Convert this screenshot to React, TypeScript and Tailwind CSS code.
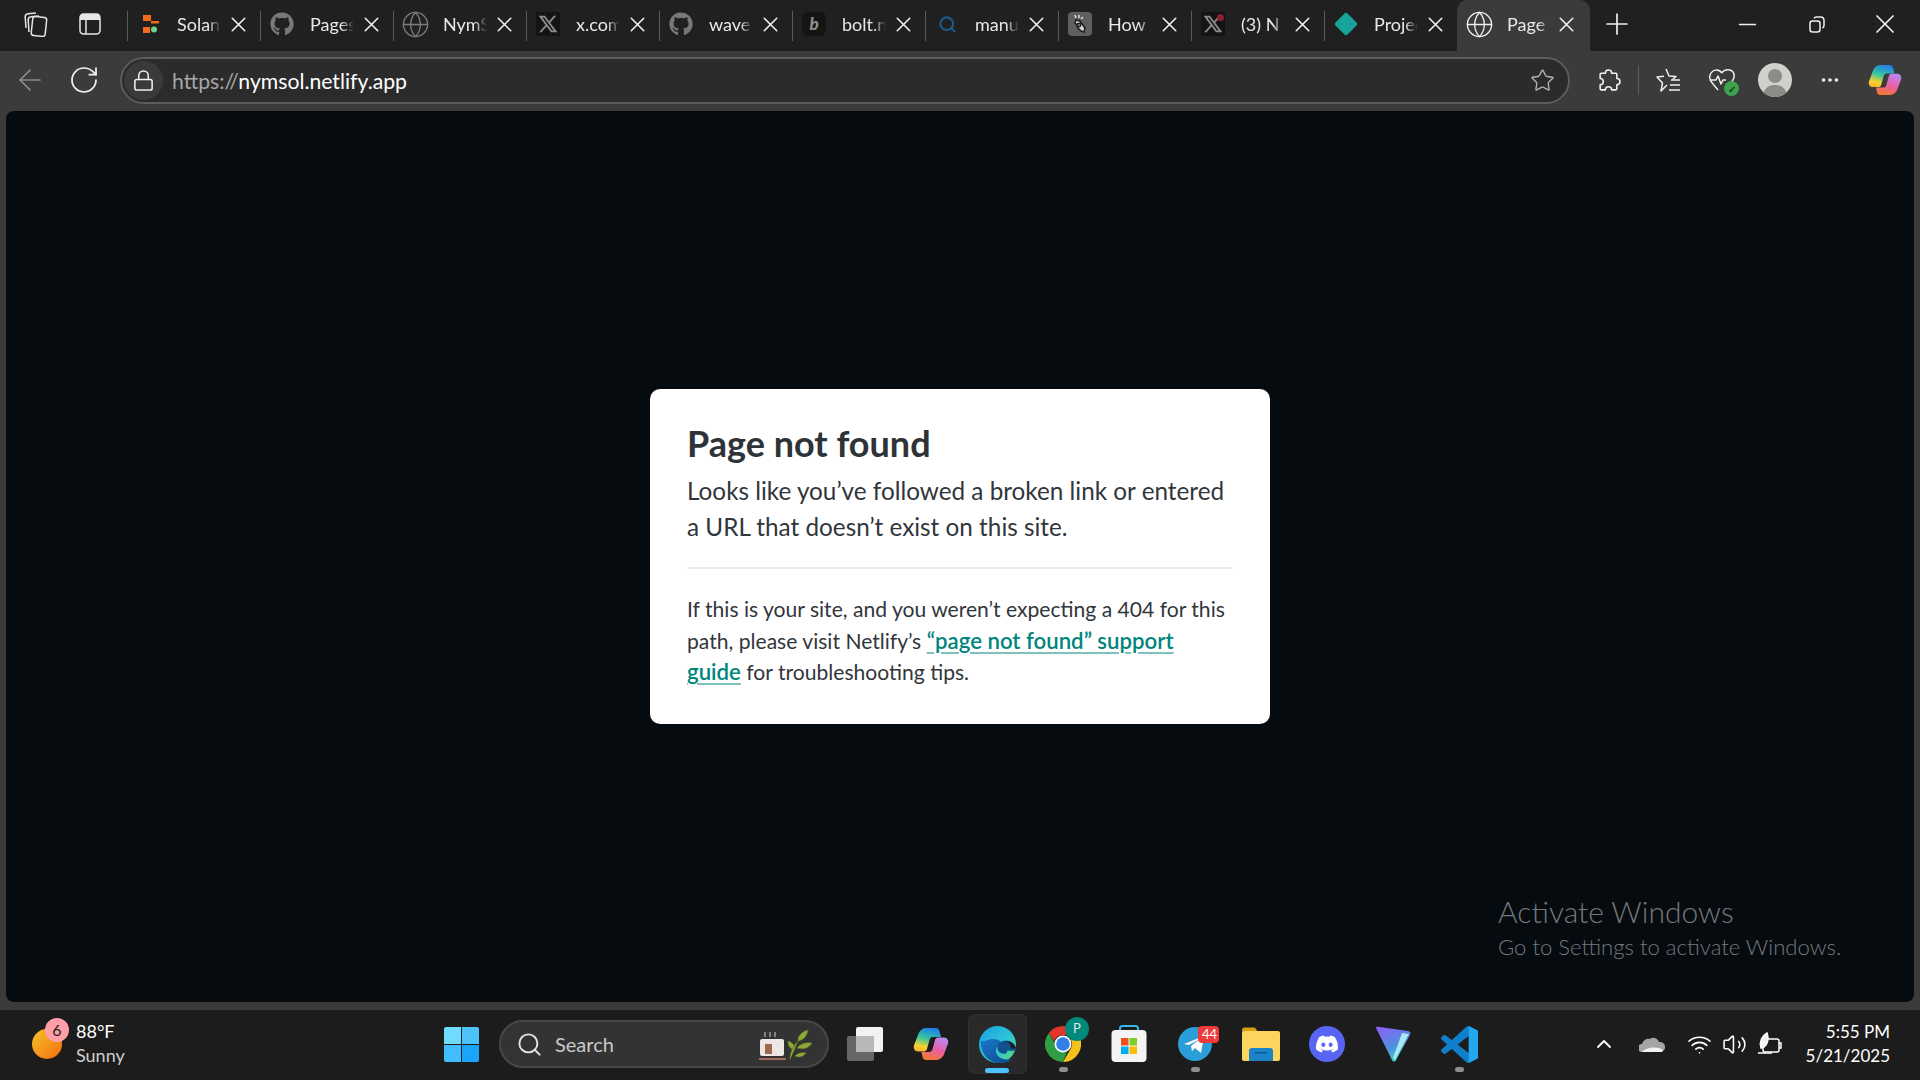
import { Globe, Search as SearchIcon, X, Plus, Minus, ArrowLeft, RotateCw, Star, ChevronUp, Wifi, Volume2, Ellipsis, Lock } from 'lucide-react'
import { FaGithub, FaDiscord } from 'react-icons/fa'
import { RiTwitterXLine } from 'react-icons/ri'
import type { ReactNode } from 'react'

function SolanaFavicon() {
  return (
    <svg width="24" height="24" viewBox="0 0 24 24">
      <rect x="6" y="3" width="8" height="6" fill="#f26a1b" />
      <rect x="14" y="9" width="8" height="2.5" fill="#f26a1b" />
      <rect x="6" y="15" width="7" height="6" fill="#f26a1b" />
      <circle cx="17" cy="17.5" r="3" fill="#6fd08c" />
    </svg>
  )
}

function XFavicon({ dot }: { dot?: boolean }) {
  return (
    <div className="relative flex h-6 w-6 items-center justify-center bg-[#141414] text-[#8c8c8c]">
      <RiTwitterXLine size={22} />
      {dot && <span className="absolute right-[1px] top-[2px] h-[7px] w-[7px] rounded-full bg-[#8c2230]" />}
    </div>
  )
}

function BoltFavicon() {
  return (
    <div className="flex h-6 w-6 items-center justify-center rounded-md bg-[#141414] text-[17px] font-black italic text-[#8f8f8f]">
      b
    </div>
  )
}

function HowFavicon() {
  return (
    <div className="flex h-6 w-6 items-center justify-center rounded bg-[#5f5f5f]">
      <svg width="18" height="20" viewBox="0 0 18 20" fill="none" stroke="#1e1e1e" strokeWidth="1.6">
        <path d="M5 6l4 1 2 3 3 4-1 4-3-1-3-3-1-3-2-2z" fill="#d5d5d5" />
        <circle cx="8" cy="11" r="1.6" />
        <path d="M4 1l1 3M8 1v3M12 3l-2 2" stroke="#d5d5d5" />
      </svg>
    </div>
  )
}

function NetlifyFavicon() {
  return (
    <svg width="24" height="24" viewBox="0 0 24 24">
      <rect x="3.5" y="3.5" width="17" height="17" rx="2.5" fill="#15a39a" transform="rotate(45 12 12)" />
    </svg>
  )
}

function CopilotIcon({ size }: { size: number }) {
  return (
    <svg width={size} height={size} viewBox="0 0 36 36">
      <defs>
        <linearGradient id="copA" x1="0.6" y1="0" x2="0.3" y2="1">
          <stop offset="0" stopColor="#1f7fe8" />
          <stop offset="0.45" stopColor="#37c6a0" />
          <stop offset="0.8" stopColor="#f6d32e" />
          <stop offset="1" stopColor="#f7b52c" />
        </linearGradient>
        <linearGradient id="copB" x1="0.7" y1="0" x2="0.3" y2="1">
          <stop offset="0" stopColor="#b78af0" />
          <stop offset="0.5" stopColor="#e85ea8" />
          <stop offset="1" stopColor="#f47a2c" />
        </linearGradient>
      </defs>
      <path d="M17 2h6c2 0 3 1.500 3.500 3L28 11h-8c-2 0-3 1-3.500 3l-2.500 9c-.5 1.500-1.500 2.500-3 2.500H5c-3 0-5-3-4-6l4.500-12C7 4 10 2 13 2z" fill="url(#copA)" />
      <path d="M19 34h-6c-2 0-3-1.500-3.500-3L8.500 26H16c2 0 3-1 3.500-3l2.500-9c.5-1.500 1.500-2.500 3-2.500H31c3 0 5 3 4 6l-4.500 12C29 32 26 34 23 34z" fill="url(#copB)" />
    </svg>
  )
}

function EdgeIcon() {
  return (
    <svg width="37" height="37" viewBox="0 0 36 36">
      <defs>
        <linearGradient id="edgeTop" x1="0" y1="0" x2="1" y2="1">
          <stop offset="0" stopColor="#1b9de2" />
          <stop offset="0.55" stopColor="#2dc6d8" />
          <stop offset="1" stopColor="#5fdc70" />
        </linearGradient>
        <linearGradient id="edgeLow" x1="0" y1="0" x2="1" y2="1">
          <stop offset="0" stopColor="#1a78c8" />
          <stop offset="1" stopColor="#0d4a92" />
        </linearGradient>
      </defs>
      <circle cx="18" cy="18" r="18" fill="url(#edgeTop)" />
      <path d="M2 14C1 26 9 36 20 36c5 0 9-1 12-4-4 1-8 1-11-1-4-2-6-7-3-11 1-2 3-3 5-3-3-4-8-5-12-4-4 1-7 3-9 1z" fill="url(#edgeLow)" />
      <path d="M36 21c-1-4-5-7-10-7-4 0-8 3-8 7 0 4 3 6 6 6 3 0 4-2 3-3h9z" fill="#11518f" />
      <path d="M36 22c-2-5-6-8-11-7 4 0 6 3 6 6v1z" fill="#1c1c1c" />
    </svg>
  )
}

function ChromeIcon() {
  return (
    <svg width="36" height="36" viewBox="0 0 36 36">
      <path d="M18 0a18 18 0 0 1 15.600 9H18a9 9 0 0 0-8.600 6.300L3.900 6.900A18 18 0 0 1 18 0z" fill="#e5352b" />
      <path d="M33.600 9A18 18 0 0 1 18 36l7.800-13.500A9 9 0 0 0 25.800 13.500z" fill="#f9c21b" />
      <path d="M18 36A18 18 0 0 1 3.900 6.900l7.800 13.500A9 9 0 0 0 22 26z" fill="#2f9e44" />
      <circle cx="18" cy="18" r="8.500" fill="#ffffff" />
      <circle cx="18" cy="18" r="6.800" fill="#2f7fe6" />
    </svg>
  )
}

function StoreIcon() {
  return (
    <svg width="36" height="38" viewBox="0 0 36 38">
      <path d="M9 8V3.500C9 2 10 1 11.500 1h13C26 1 27 2 27 3.500V8" fill="none" stroke="#35b6ef" strokeWidth="2" />
      <rect x="0.500" y="5" width="35" height="32" rx="4" fill="#f4f4f4" />
      <rect x="10" y="13" width="7.500" height="7.500" fill="#f1511b" />
      <rect x="18.500" y="13" width="7.500" height="7.500" fill="#80cc28" />
      <rect x="10" y="21.500" width="7.500" height="7.500" fill="#00adef" />
      <rect x="18.500" y="21.500" width="7.500" height="7.500" fill="#fbbc09" />
    </svg>
  )
}

function TelegramIcon() {
  return (
    <svg width="34" height="34" viewBox="0 0 34 34">
      <circle cx="17" cy="17" r="17" fill="#2a9ed8" />
      <path d="M6 17l20-8-3 17-6-5-3 3-1-5 9-7-11 6z" fill="#ffffff" />
    </svg>
  )
}

function FolderIcon() {
  return (
    <svg width="38" height="34" viewBox="0 0 38 34">
      <path d="M0 3c0-1.500 1-2.500 2.500-2.500h9c1 0 2 .5 2.500 1.500l1.500 2.500H0z" fill="#d9a016" />
      <rect x="0" y="4" width="38" height="30" rx="2" fill="#fcd55f" />
      <path d="M7 34V24c0-2 1-3 3-3h18c2 0 3 1 3 3v10z" fill="#1b84c9" />
      <rect x="13" y="25" width="12" height="1.600" fill="#0e5d96" />
    </svg>
  )
}

function VpnIcon() {
  return (
    <svg width="36" height="36" viewBox="0 0 36 36">
      <defs>
        <linearGradient id="vpnA" x1="0.2" y1="0" x2="0.6" y2="1">
          <stop offset="0" stopColor="#8a63f5" />
          <stop offset="0.6" stopColor="#4e8fe0" />
          <stop offset="1" stopColor="#3fd8c8" />
        </linearGradient>
      </defs>
      <path d="M1 2c0-1 1-1.500 2-1.300L33 5c2 .3 3 2 2 4L21 34c-1 2-3 2-4 0z" fill="url(#vpnA)" />
      <path d="M27 7l7 1-14 26-2-2z" fill="#a9e8ec" />
    </svg>
  )
}

function VscodeIcon() {
  return (
    <svg width="37" height="37" viewBox="0 0 24 24">
      <path d="M23.150 2.587L18.210.21a1.494 1.494 0 0 0-1.705.29l-9.460 8.630-4.120-3.128a.999.999 0 0 0-1.276.057L.327 7.261A1 1 0 0 0 .326 8.740L3.899 12 .326 15.260a1 1 0 0 0 .001 1.479L1.650 17.940a.999.999 0 0 0 1.276.057l4.120-3.128 9.460 8.630a1.492 1.492 0 0 0 1.704.29l4.942-2.377A1.500 1.500 0 0 0 24 20.060V3.939a1.500 1.500 0 0 0-.85-1.352zm-5.146 14.861L10.826 12l7.178-5.448v10.896z" fill="#0f7fc9" />
      <path d="M18 .1c.1 0 .2.1.3.1l4.850 2.387A1.500 1.500 0 0 1 24 3.939V20.060a1.500 1.500 0 0 1-.85 1.352L18.200 23.790c-.1.1-.2.100-.3.100l.1-6.450V6.550z" fill="#22a7f0" />
    </svg>
  )
}

function Tab({ icon, label, active }: { icon: ReactNode; label: string; active?: boolean }) {
  return (
    <div
      className={
        active
          ? 'flex h-[51px] w-[133px] items-center rounded-t-[10px] bg-[#3b3b3b] pb-[3px] pl-[10px]'
          : 'relative flex h-[51px] w-[133px] items-center pb-[3px] pl-[10px]'
      }
    >
      {!active && <span className="absolute left-0 top-[11px] h-[30px] w-px bg-[#5a5a5a]" />}
      <div className="flex h-6 w-6 shrink-0 items-center justify-center">{icon}</div>
      <div className="ml-[16px] w-[44px] overflow-hidden whitespace-nowrap text-[18px] text-[#e8e8e8] [mask-image:linear-gradient(90deg,#000_70%,transparent)]">
        {label}
      </div>
      <X className={active ? 'ml-[3px] shrink-0 text-[#f2f2f2]' : 'ml-[5px] shrink-0 text-[#f2f2f2]'} size={25} strokeWidth={1.5} />
    </div>
  )
}

function TabBar() {
  return (
    <div className="flex h-[51px] bg-[#202020]">
      <div className="flex w-[127px] items-center pb-[3px] pl-[24px] text-[#e6e6e6]">
        <svg width="24" height="26" viewBox="0 0 24 26" fill="none" stroke="currentColor" strokeWidth="1.500">
          <rect x="8" y="6" width="14" height="19" rx="2.500" transform="rotate(6 15 15)" />
          <path d="M5 21l-.8-12c-.1-2 1-3 2.800-3.200L15 5" />
          <path d="M2 17l-.8-11c-.1-2 1-3 2.800-3.200L12 2" />
        </svg>
        <svg className="ml-[30px]" width="24" height="24" viewBox="0 0 24 24">
          <rect x="2" y="2" width="20" height="20" rx="3.500" fill="none" stroke="currentColor" strokeWidth="1.500" />
          <path d="M5.500 2h13A3.500 3.500 0 0 1 22 5.500V8H2V5.500A3.500 3.500 0 0 1 5.500 2z" fill="currentColor" />
          <path d="M8 8v14" stroke="currentColor" strokeWidth="1.500" />
        </svg>
      </div>
      <Tab icon={<SolanaFavicon />} label="Solana" />
      <Tab icon={<FaGithub size={24} color="#787878" />} label="Pages" />
      <Tab icon={<Globe className="shrink-0" size={29} color="#7c7c7c" strokeWidth={1.1} />} label="NymSol" />
      <Tab icon={<XFavicon />} label="x.com" />
      <Tab icon={<FaGithub size={24} color="#787878" />} label="wave" />
      <Tab icon={<BoltFavicon />} label="bolt.new" />
      <Tab icon={<SearchIcon size={19} color="#1d5a8c" strokeWidth={2.6} />} label="manus" />
      <Tab icon={<HowFavicon />} label="How" />
      <Tab icon={<XFavicon dot />} label="(3) N" />
      <Tab icon={<NetlifyFavicon />} label="Project" />
      <Tab icon={<Globe className="shrink-0" size={29} color="#f0f0f0" strokeWidth={1.1} />} label="Page" active />
      <div className="flex flex-1 items-center pb-[3px] text-[#efefef]">
        <Plus className="ml-[10px]" size={34} strokeWidth={1.2} />
        <Minus className="ml-[100px]" size={27} strokeWidth={1.5} />
        <svg className="ml-[48px]" width="16" height="17" viewBox="0 0 16 17" fill="none" stroke="currentColor" strokeWidth="1.500">
          <rect x="1" y="5" width="10" height="11" rx="2.500" />
          <path d="M5 2.500c.4-1 1.200-1.500 2.500-1.500h4c2 0 3.500 1.500 3.500 3.500v5c0 1.200-.5 2-1.500 2.500" />
        </svg>
        <X className="ml-[44px]" size={32} strokeWidth={1.3} />
      </div>
    </div>
  )
}

function ToolBar() {
  return (
    <div className="flex h-[60px] items-center bg-[#3b3b3b] pb-[2px] text-[#f0f0f0]">
      <ArrowLeft className="ml-[13px] text-[#8c8c8c]" size={34} strokeWidth={1.2} />
      <RotateCw className="ml-[21px]" size={32} strokeWidth={1.3} />
      <div className="ml-[20px] flex h-[47px] w-[1450px] items-center rounded-full border-2 border-[#5c5c5c] bg-[#2b2b2b] pl-[2px] pr-[13px]">
        <div className="flex h-[39px] w-[39px] items-center justify-center rounded-full bg-[#3a3a3a]">
          <Lock size={23} strokeWidth={1.6} />
        </div>
        <div className="ml-[9px] flex-1 pt-[3px] text-[21.200px] leading-none">
          <span className="text-[#a6a6a6]">https://</span>
          <span className="text-white">nymsol.netlify.app</span>
        </div>
        <Star size={25} strokeWidth={1.3} className="text-[#b4b4b4]" />
      </div>
      <svg className="ml-[26px]" width="25" height="25" viewBox="0 0 24 24" fill="none" stroke="currentColor" strokeWidth="1.500" strokeLinejoin="round">
        <path d="M9 5a3 3 0 0 1 6 0h4a1 1 0 0 1 1 1v4a3 3 0 0 1 0 6v4a1 1 0 0 1-1 1h-4a3 3 0 0 0-6 0H5a1 1 0 0 1-1-1v-4a3 3 0 0 0 0-6V6a1 1 0 0 1 1-1z" />
      </svg>
      <span className="ml-[17px] h-[30px] w-px bg-[#5e5e5e]" />
      <svg className="ml-[16px]" width="26" height="26" viewBox="0 0 26 26" fill="none" stroke="currentColor" strokeWidth="1.500" strokeLinejoin="round">
        <path d="M11 2l3 7 7 .5-3.500 3M12 18l-6 6 1.500-8L2 10l7-.8" />
        <path d="M16 13h9M15 18h10M14 23h11" />
      </svg>
      <div className="relative ml-[27px] h-[28px] w-[28px]">
        <svg width="28" height="28" viewBox="0 0 28 28" fill="none" stroke="currentColor" strokeWidth="1.500" strokeLinejoin="round">
          <path d="M14 7c2-4 10-5 12 1 1 4-2 8-5 11M10 24L5 18C2 15 1 11 2.500 8 5 3 11 3 14 7" />
          <path d="M2 14h6l2-4 3 8 2-4h3" />
        </svg>
        <span className="absolute -bottom-[2px] -right-[3px] flex h-[15px] w-[15px] items-center justify-center rounded-full bg-[#3fa34d] text-[10px] font-bold leading-none text-[#1d3a22]">
          ✓
        </span>
      </div>
      <div className="relative ml-[22px] h-[34px] w-[34px] overflow-hidden rounded-full bg-[#d0d0cc]">
        <span className="absolute left-[10px] top-[6px] h-[14px] w-[14px] rounded-full bg-[#8b8b88]" />
        <span className="absolute left-[5px] top-[22px] h-[22px] w-[24px] rounded-full bg-[#8b8b88]" />
      </div>
      <Ellipsis className="ml-[27px]" size={22} strokeWidth={2} />
      <div className="ml-[27px]">
        <CopilotIcon size={34} />
      </div>
    </div>
  )
}

function Viewport() {
  return (
    <div className="flex flex-1 bg-[#3b3b3b] px-[6px] pb-[8px]">
      <div className="relative flex flex-1 items-center justify-center rounded-lg bg-[#060b10]">
        <div className="w-[620px] rounded-[10px] bg-white pb-[36px] pl-[37px] pr-[37px] pt-[36px] text-[#2e3338]">
          <h1 className="text-[36px] font-bold leading-[36px]">Page not found</h1>
          <p className="mt-[12px] text-[24.300px] leading-[36px] text-[#31363b]">
            Looks like you’ve followed a broken link or entered a URL that doesn’t exist on this site.
          </p>
          <hr className="mt-[22px] border-0 border-t-[2px] border-[#eaebec]" />
          <p className="mt-[24px] text-[21.100px] leading-[31.500px] text-[#31363b]">
            If this is your site, and you weren’t expecting a 404 for this path, please visit Netlify’s{' '}
            <a className="text-[22.200px] font-semibold text-[#00857c] underline decoration-[#7fc2bd] decoration-2 underline-offset-[3px]">
              “page not found” support
              <br />
              guide
            </a>{' '}
            for troubleshooting tips.
          </p>
        </div>
        <div className="absolute bottom-[40px] left-[1492px] text-[#75787c]">
          <div className="mb-[3px] text-[30px] font-light leading-[36px]">Activate Windows</div>
          <div className="text-[22.100px] font-light leading-[30px]">Go to Settings to activate Windows.</div>
        </div>
      </div>
    </div>
  )
}

function DockItem({ children, dot }: { children: ReactNode; dot?: boolean }) {
  return (
    <div className="relative flex h-[70px] w-[66px] items-center justify-center">
      {children}
      {dot && <span className="absolute bottom-[7px] h-[5px] w-[9px] rounded-full bg-[#8e8e8e]" />}
    </div>
  )
}

function TaskBar() {
  return (
    <div className="flex h-[70px] items-center bg-[#1c1c1c] pb-[2px] text-white">
      <div className="relative ml-[32px] h-[30px] w-[30px] rounded-full bg-gradient-to-br from-[#f4c22b] to-[#f26a0c]">
        <span className="absolute -right-[7px] -top-[11px] flex h-6 w-6 items-center justify-center rounded-full bg-[#ffa0a9] text-[16px] leading-none text-[#1c1c1c]">
          6
        </span>
      </div>
      <div className="ml-[14px] w-[120px] pb-[2px] text-[18px] leading-[24px]">
        <div>88°F</div>
        <div className="text-[#cfcfcf]">Sunny</div>
      </div>
      <div className="ml-[248px] grid h-[35px] w-[35px] grid-cols-2 gap-[1px]">
        <span className="rounded-tl-[2px] bg-[#6fdcff]" />
        <span className="rounded-tr-[2px] bg-[#4cc4fb]" />
        <span className="rounded-bl-[2px] bg-[#3fbdfc]" />
        <span className="rounded-br-[2px] bg-[#1aa5fb]" />
      </div>
      <div className="ml-[20px] flex h-[48px] w-[330px] items-center rounded-full border-2 border-[#484848] bg-[#333333] pl-[15px]">
        <SearchIcon size={27} strokeWidth={1.7} className="text-[#e4e4e4]" />
        <span className="ml-[12px] flex-1 text-[20px] text-[#c9c9c9]">Search</span>
        <svg width="60" height="36" viewBox="0 0 60 36" className="mr-[8px]">
          <path d="M6 6v5M11 6v5M16 6v5" stroke="#9a9a9a" strokeWidth="1.500" />
          <rect x="1" y="13" width="24" height="17" rx="2" fill="#ece7e4" />
          <rect x="6" y="18" width="7" height="10" fill="#9b6a4c" />
          <rect x="0" y="32" width="27" height="2" fill="#a86a62" />
          <path d="M31 34c0-8 3-14 8-19M36 24c-5-1-7-4-7-9 4 1 7 4 7 9zM39 15c0-5 3-9 10-11-1 6-4 10-10 11zM38 22c3-4 8-6 15-5-3 5-8 7-15 5zM36 30c3-3 6-4 11-3-3 4-7 5-11 3z" fill="#8fa83a" stroke="#5f7a20" strokeWidth="0.600" />
        </svg>
      </div>
      <div className="ml-[3px] flex">
        <DockItem>
          <div className="relative h-[34px] w-[36px]">
            <span className="absolute bottom-0 left-0 h-[25px] w-[27px] rounded-[2px] bg-[#666666]" />
            <span className="absolute right-0 top-0 h-[25px] w-[27px] rounded-[2px] bg-[#f2f2f2]" />
            <span className="absolute left-[9px] top-[9px] h-[16px] w-[18px] bg-[#b8b8b8]" />
          </div>
        </DockItem>
        <DockItem>
          <CopilotIcon size={36} />
        </DockItem>
        <div className="relative flex h-[70px] w-[66px] items-center justify-center">
          <div className="flex h-[60px] w-[59px] items-center justify-center rounded-md border border-[#303030] bg-[#292929]">
            <EdgeIcon />
          </div>
          <span className="absolute bottom-[6px] h-[5px] w-[24px] rounded-full bg-[#4cc2ff]" />
        </div>
        <DockItem dot>
          <ChromeIcon />
          <span className="absolute left-[35px] top-[8px] flex h-6 w-6 items-center justify-center rounded-full bg-[#00897b] text-[13px] text-[#d8efec]">
            P
          </span>
        </DockItem>
        <DockItem>
          <StoreIcon />
        </DockItem>
        <DockItem dot>
          <TelegramIcon />
          <span className="absolute left-[36px] top-[17px] flex h-[17px] w-[21px] items-center justify-end rounded-[4px] bg-[#ee3a3a] pr-[2px] text-[13px] leading-none text-white">
            44
          </span>
        </DockItem>
        <DockItem>
          <FolderIcon />
        </DockItem>
        <DockItem>
          <div className="flex h-9 w-9 items-center justify-center rounded-full bg-[#5865f2]">
            <FaDiscord size={24} color="#ffffff" />
          </div>
        </DockItem>
        <DockItem>
          <VpnIcon />
        </DockItem>
        <DockItem dot>
          <VscodeIcon />
        </DockItem>
      </div>
      <ChevronUp className="ml-[100px]" size={24} strokeWidth={1.8} />
      <svg className="ml-[23px]" width="26" height="18" viewBox="0 0 26 18">
        <path d="M3 17a4 4 0 0 1 0-8c1-4 5-6 8-5 2-2 7-2 9 3a5 5 0 0 1 2 10z" fill="#a5a5a5" />
        <path d="M3 17c4-5 16-6 21-2 0 1-1 2-2 2z" fill="#f2f2f2" />
      </svg>
      <Wifi className="ml-[22px]" size={25} strokeWidth={1.6} />
      <Volume2 className="ml-[10px]" size={25} strokeWidth={1.5} />
      <svg className="ml-[10px]" width="25" height="26" viewBox="0 0 25 26" fill="none" stroke="currentColor" strokeWidth="1.500">
        <rect x="6" y="8" width="16" height="13" rx="2" />
        <path d="M22 12h2v5h-2M1 22h14" />
        <path d="M4 17c-2-6 1-12 6-15 2 5 1 11-3 14z" fill="#f2f2f2" />
      </svg>
      <div className="ml-auto pr-[30px] text-right text-[17px] leading-[24px]">
        <div>5:55 PM</div>
        <div>5/21/2025</div>
      </div>
    </div>
  )
}

export default function App() {
  return (
    <div className="flex h-[1080px] w-[1920px] flex-col overflow-hidden font-['Lato','Noto_Sans',sans-serif]">
      <TabBar />
      <ToolBar />
      <Viewport />
      <TaskBar />
    </div>
  )
}
